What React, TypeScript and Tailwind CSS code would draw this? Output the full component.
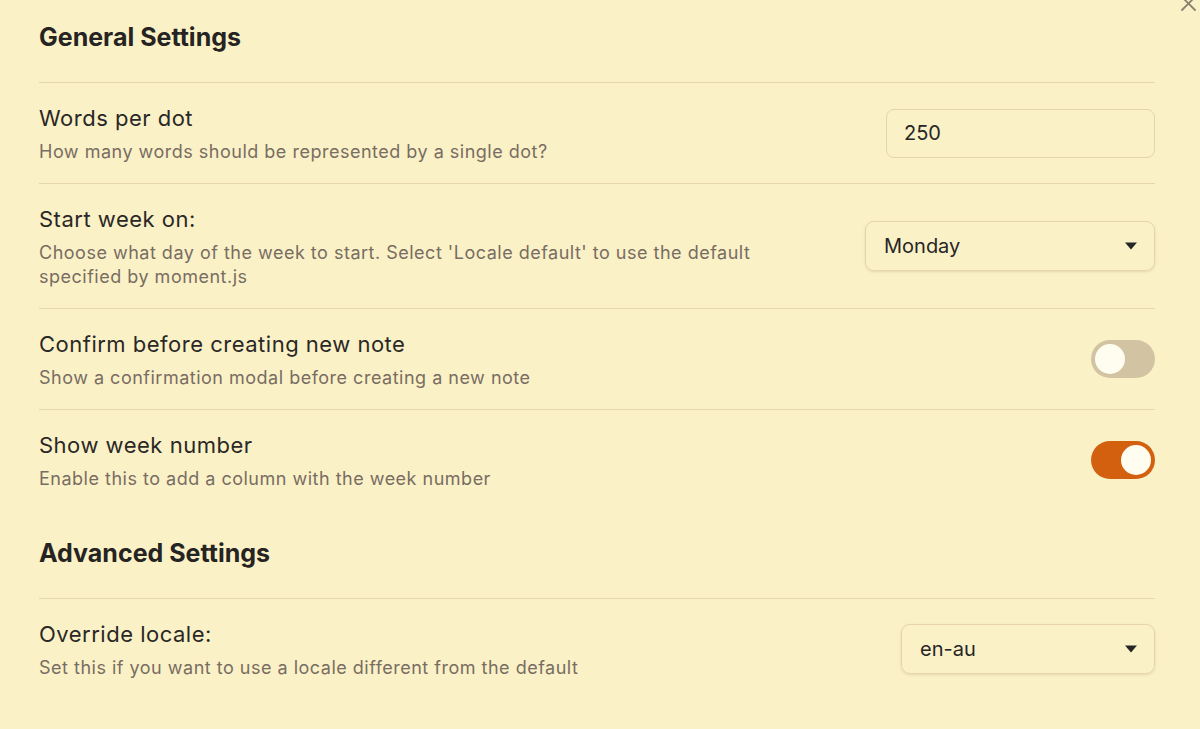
import React from "react";

const font = { fontFamily: "Inter, 'Noto Sans', sans-serif" };

function Caret() {
  return (
    <svg width="14" height="8" viewBox="0 0 14 8" className="shrink-0">
      <path d="M1 0.5 H13 L7 7.5 Z" fill="#262626" />
    </svg>
  );
}

function Toggle({ on }: { on: boolean }) {
  return (
    <div
      className={
        "w-[64px] h-[38px] rounded-full flex items-center px-[4px] " +
        (on ? "bg-[#d2600f] justify-end" : "bg-[#d2c4a2] justify-start")
      }
    >
      <div className="w-[30px] h-[30px] rounded-full bg-[#fffdf0]" />
    </div>
  );
}

function Row({
  name,
  desc,
  children,
  last,
}: {
  name: string;
  desc: React.ReactNode;
  children: React.ReactNode;
  last?: boolean;
}) {
  return (
    <div
      className={
        "flex items-center justify-between gap-8 pt-[19px] pb-[19px] " +
        (last ? "" : "border-b border-[#e6d7b2]")
      }
    >
      <div className="flex flex-col gap-[6px]">
        <div className="text-[22px] leading-[32px] tracking-[0.5px] text-[#2a2826]">{name}</div>
        <div className="text-[18px] leading-[24px] tracking-[0.5px] text-[#786d62]">{desc}</div>
      </div>
      {children}
    </div>
  );
}

function Heading({ children, top }: { children: React.ReactNode; top: string }) {
  return (
    <div className={"border-b border-[#e6d7b2] pb-[27px] " + top}>
      <h2 className="text-[25px] leading-[36px] font-bold text-[#262422]">{children}</h2>
    </div>
  );
}

export default function App() {
  return (
    <div className="relative w-[1200px] h-[729px] overflow-hidden bg-[#fbf1c7]" style={font}>
      {/* close button, cut off at top edge */}
      <div className="absolute right-[3px] top-[-5px] text-[#8b8273]">
        <svg width="17" height="17" viewBox="0 0 17 17">
          <path d="M2 2 L15 15 M15 2 L2 15" stroke="currentColor" strokeWidth="1.8" strokeLinecap="round" />
        </svg>
      </div>

      <div className="pl-[39px] pr-[45px]">
        <Heading top="pt-[19px]">General Settings</Heading>

        <Row name="Words per dot" desc="How many words should be represented by a single dot?">
          <div className="w-[269px] h-[49px] rounded-[8px] border border-[#e6d5ab] flex items-center px-[17px] text-[20px] text-[#262626]">
            250
          </div>
        </Row>

        <Row
          name="Start week on:"
          desc={
            <>
              Choose what day of the week to start. Select 'Locale default' to use the default
              <br />
              specified by moment.js
            </>
          }
        >
          <div className="w-[290px] h-[50px] rounded-[9px] border border-[#e6d5ab] shadow-[0_1px_3px_rgba(120,100,60,0.18)] flex items-center justify-between pl-[18px] pr-[16px] text-[20px] text-[#262626]">
            <span>Monday</span>
            <Caret />
          </div>
        </Row>

        <Row name="Confirm before creating new note" desc="Show a confirmation modal before creating a new note">
          <Toggle on={false} />
        </Row>

        <Row name="Show week number" desc="Enable this to add a column with the week number" last>
          <Toggle on />
        </Row>

        <Heading top="mt-[25px]">Advanced Settings</Heading>

        <Row name="Override locale:" desc="Set this if you want to use a locale different from the default" last>
          <div className="w-[254px] h-[50px] rounded-[9px] border border-[#e6d5ab] shadow-[0_1px_3px_rgba(120,100,60,0.18)] flex items-center justify-between pl-[18px] pr-[16px] text-[20px] text-[#262626]">
            <span>en-au</span>
            <Caret />
          </div>
        </Row>
      </div>
    </div>
  );
}
